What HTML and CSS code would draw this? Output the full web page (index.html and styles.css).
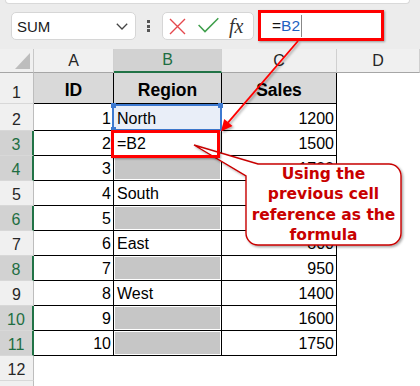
FILE: index.html
```html
<!DOCTYPE html>
<html>
<head>
<meta charset="utf-8">
<title>Sheet</title>
<link rel="stylesheet" href="styles.css">
</head>
<body>
<div class="ribbon-edge"></div>
<div class="fbar">
  <div class="namebox"><span>SUM</span><svg class="chev" width="12" height="7" viewBox="0 0 12 7"><path d="M0.8 0.8 L6 6 L11.2 0.8"/></svg></div>
  <div class="dots"><i></i><i></i><i></i></div>
  <div class="fxbox">
    <svg class="ic-x" width="17" height="17" viewBox="0 0 17 17"><path d="M1 1 L16 16 M16 1 L1 16"/></svg>
    <svg class="ic-ok" width="21" height="16" viewBox="0 0 21 16"><path d="M0.6 8 L7 14.6 L20.3 1.2"/></svg>
    <span class="fx">fx</span>
  </div>
  <div class="finput"><span class="eq">=</span><span class="refb">B2</span><span class="caret"></span></div>
</div>

<div class="sheet">
  <div class="corner"><i class="tri"></i></div>
  <div class="ch">A</div><div class="ch sel">B</div><div class="ch">C</div><div class="ch">D</div>

  <div class="rh">1</div><div class="c hd">ID</div><div class="c hd">Region</div><div class="c hd">Sales</div><div class="e"></div>
  <div class="rh">2</div><div class="c n">1</div><div class="c t ref">North</div><div class="c n">1200</div><div class="e"></div>
  <div class="rh hl">3</div><div class="c n">2</div><div class="c t">=B2</div><div class="c n">1500</div><div class="e"></div>
  <div class="rh hl">4</div><div class="c n">3</div><div class="c t g"></div><div class="c n">1700</div><div class="e"></div>
  <div class="rh">5</div><div class="c n">4</div><div class="c t">South</div><div class="c n"></div><div class="e"></div>
  <div class="rh hl">6</div><div class="c n">5</div><div class="c t g"></div><div class="c n"></div><div class="e"></div>
  <div class="rh">7</div><div class="c n">6</div><div class="c t">East</div><div class="c n">800</div><div class="e"></div>
  <div class="rh hl">8</div><div class="c n">7</div><div class="c t g"></div><div class="c n">950</div><div class="e"></div>
  <div class="rh">9</div><div class="c n">8</div><div class="c t">West</div><div class="c n">1400</div><div class="e"></div>
  <div class="rh hl">10</div><div class="c n">9</div><div class="c t g"></div><div class="c n">1600</div><div class="e"></div>
  <div class="rh hl">11</div><div class="c n">10</div><div class="c t g"></div><div class="c n">1750</div><div class="e"></div>
  <div class="rh">12</div><div class="e"></div><div class="e"></div><div class="e"></div><div class="e"></div>
  <div class="rh last"></div><div class="e span4"></div>
</div>

<div class="blue-sel"><i class="hdl tl"></i><i class="hdl tr"></i><i class="hdl bl"></i></div>

<svg class="ann" width="420" height="386" viewBox="0 0 420 386">
  <defs>
    <filter id="sh" x="-20%" y="-20%" width="140%" height="140%">
      <feDropShadow dx="1.5" dy="1.5" stdDeviation="1" flood-color="#000" flood-opacity="0.35"/>
    </filter>
  </defs>
  <path class="bubble" filter="url(#sh)" d="M258 164 H389 A12 12 0 0 1 401 176 V233 A12 12 0 0 1 389 245 H258 A12 12 0 0 1 246 233 V176 L194 145 Z"/>
</svg>

<div class="red-cell"></div>

<svg class="ann" width="420" height="386" viewBox="0 0 420 386">
  <g filter="url(#sh2)">
    <line x1="298" y1="41" x2="228" y2="122.6" stroke="#ff0000" stroke-width="1.8"/>
    <polygon points="221,131.5 232.5,125.9 224.2,118.9" fill="#ff0000"/>
  </g>
  <defs>
    <filter id="sh2" x="-20%" y="-20%" width="140%" height="140%">
      <feDropShadow dx="1.5" dy="1.5" stdDeviation="1" flood-color="#000" flood-opacity="0.35"/>
    </filter>
  </defs>
</svg>

<div class="callout-text">Using the<br>previous cell<br>reference as the<br>formula</div>
</body>
</html>
```
FILE: styles.css
```css
* { box-sizing: border-box; margin: 0; padding: 0; }
html, body { width: 420px; height: 386px; overflow: hidden; }
body {
  background: #ececec;
  font-family: "Liberation Sans", Arial, sans-serif;
  color: #000;
  position: relative;
}

.ribbon-edge {
  height: 4px;
  margin: 0 10px 0 5px;
  background: #fff;
  border: 1px solid #d9d9d9;
  border-top: 0;
  border-radius: 0 0 7px 7px;
}

.fbar {
  height: 45px;
  display: flex;
  align-items: flex-start;
  padding-top: 8px;
}

.namebox {
  margin-left: 11px;
  width: 125px;
  height: 28px;
  background: #fff;
  border: 1px solid #d6d6d6;
  border-radius: 5px;
  display: flex;
  align-items: center;
  justify-content: space-between;
  padding: 0 7px 0 5px;
  font-size: 15px;
  color: #1a1a1a;
}
.chev path { fill: none; stroke: #444; stroke-width: 1.3; }

.dots {
  margin-left: 11px;
  margin-top: 8px;
  width: 4px;
  display: flex;
  flex-direction: column;
  gap: 1.5px;
}
.dots i { display: block; width: 3px; height: 3px; background: #555; }

.fxbox {
  margin-left: 11px;
  width: 92px;
  height: 28px;
  background: #fff;
  border: 1px solid #d6d6d6;
  border-radius: 5px;
  display: flex;
  align-items: center;
  padding-left: 6px;
}
.ic-x path { fill: none; stroke: #e5484d; stroke-width: 1.4; }
.ic-ok { margin-left: 12px; margin-top: -2px; }
.ic-ok path { fill: none; stroke: #3f9f4c; stroke-width: 1.5; }
.fx {
  margin-left: 10px;
  font-family: "Liberation Serif", "Times New Roman", serif;
  font-style: italic;
  font-size: 20px;
  color: #333;
  line-height: 20px;
}

.finput {
  margin-left: 4px;
  margin-top: -2px;
  width: 126px;
  height: 31px;
  background: #fff;
  border: 3px solid #ff0000;
  box-shadow: 1px 1px 2px rgba(0,0,0,0.35);
  display: flex;
  align-items: center;
  padding-left: 11px;
  font-size: 15.5px;
}
.finput .eq { color: #111; }
.finput .refb { color: #1f62c0; }
.finput .caret { width: 1px; height: 22px; background: #888; margin-left: 1px; }

.sheet {
  display: grid;
  grid-template-columns: 34px 80px 108px 115px 83px;
  grid-template-rows: 24px 31px 27px repeat(10, 25px) 5px;
  background: #fff;
}

.corner {
  background: #f0f0f0;
  border-right: 1px solid #c8c8c8;
  border-bottom: 1px solid #a6a6a6;
  position: relative;
}
.tri {
  position: absolute;
  left: 15px;
  top: 4px;
  width: 15px;
  height: 16px;
  background: #bdbdbd;
  clip-path: polygon(100% 0, 100% 100%, 0 100%);
}

.ch {
  background: #f0f0f0;
  border-right: 1px solid #d0d0d0;
  border-bottom: 1px solid #a6a6a6;
  display: flex;
  align-items: center;
  justify-content: center;
  font-size: 16px;
  color: #262626;
}
.ch.sel {
  background: #d2d2d2;
  color: #1e6e42;
  border-bottom: 2px solid #217346;
}

.rh {
  background: #f0f0f0;
  border-right: 1px solid #bdbdbd;
  border-bottom: 1px solid #d8d8d8;
  display: flex;
  align-items: flex-end;
  justify-content: center;
  font-size: 16px;
  line-height: 20px;
  color: #262626;
}
.rh.hl {
  background: #d2d2d2;
  color: #1e6e42;
  border-right: 2px solid #217346;
}
.rh.last { border-bottom: 0; }

.c {
  border-right: 1px solid #000;
  border-bottom: 1px solid #000;
  font-size: 16px;
  line-height: 20px;
  display: flex;
  align-items: flex-end;
  padding-bottom: 1px;
  white-space: nowrap;
  overflow: hidden;
}
.c.n { justify-content: flex-end; padding-right: 2px; }
.c.t { padding-left: 3px; }
.c.hd {
  background: #d9d9d9;
  font-weight: bold;
  font-size: 17.5px;
  justify-content: center;
  align-items: center;
  padding: 4px 0 0 0;
}
.c.g { background: #c6c6c6; box-shadow: inset 0 0 0 1px #fff; }
.c.ref { background: #e9eef8; }

.e { background: #fff; }
.e.span4 { grid-column: span 4; }

.blue-sel {
  position: absolute;
  left: 112px;
  top: 104px;
  width: 110px;
  height: 27px;
  border: 2px solid #3d79d0;
}
.hdl {
  position: absolute;
  width: 5px;
  height: 5px;
  background: #3d79d0;
}
.hdl.tl { left: -3px; top: -3px; }
.hdl.tr { right: -3px; top: -3px; }
.hdl.bl { left: -3px; bottom: -3px; }

.red-cell {
  position: absolute;
  left: 111px;
  top: 130px;
  width: 109px;
  height: 28px;
  border: 3px solid #ff0000;
  box-shadow: 1px 1px 2px rgba(0,0,0,0.35);
}

.ann {
  position: absolute;
  left: 0;
  top: 0;
  pointer-events: none;
}
.bubble { fill: #fff; stroke: #c80000; stroke-width: 1.4; }

.callout-text {
  position: absolute;
  left: 246px;
  top: 164px;
  width: 155px;
  height: 81px;
  display: flex;
  flex-direction: column;
  justify-content: center;
  align-items: center;
  text-align: center;
  font-family: "DejaVu Sans", Verdana, sans-serif;
  font-weight: bold;
  font-size: 15.5px;
  line-height: 20.3px;
  color: #c80000;
}
```
